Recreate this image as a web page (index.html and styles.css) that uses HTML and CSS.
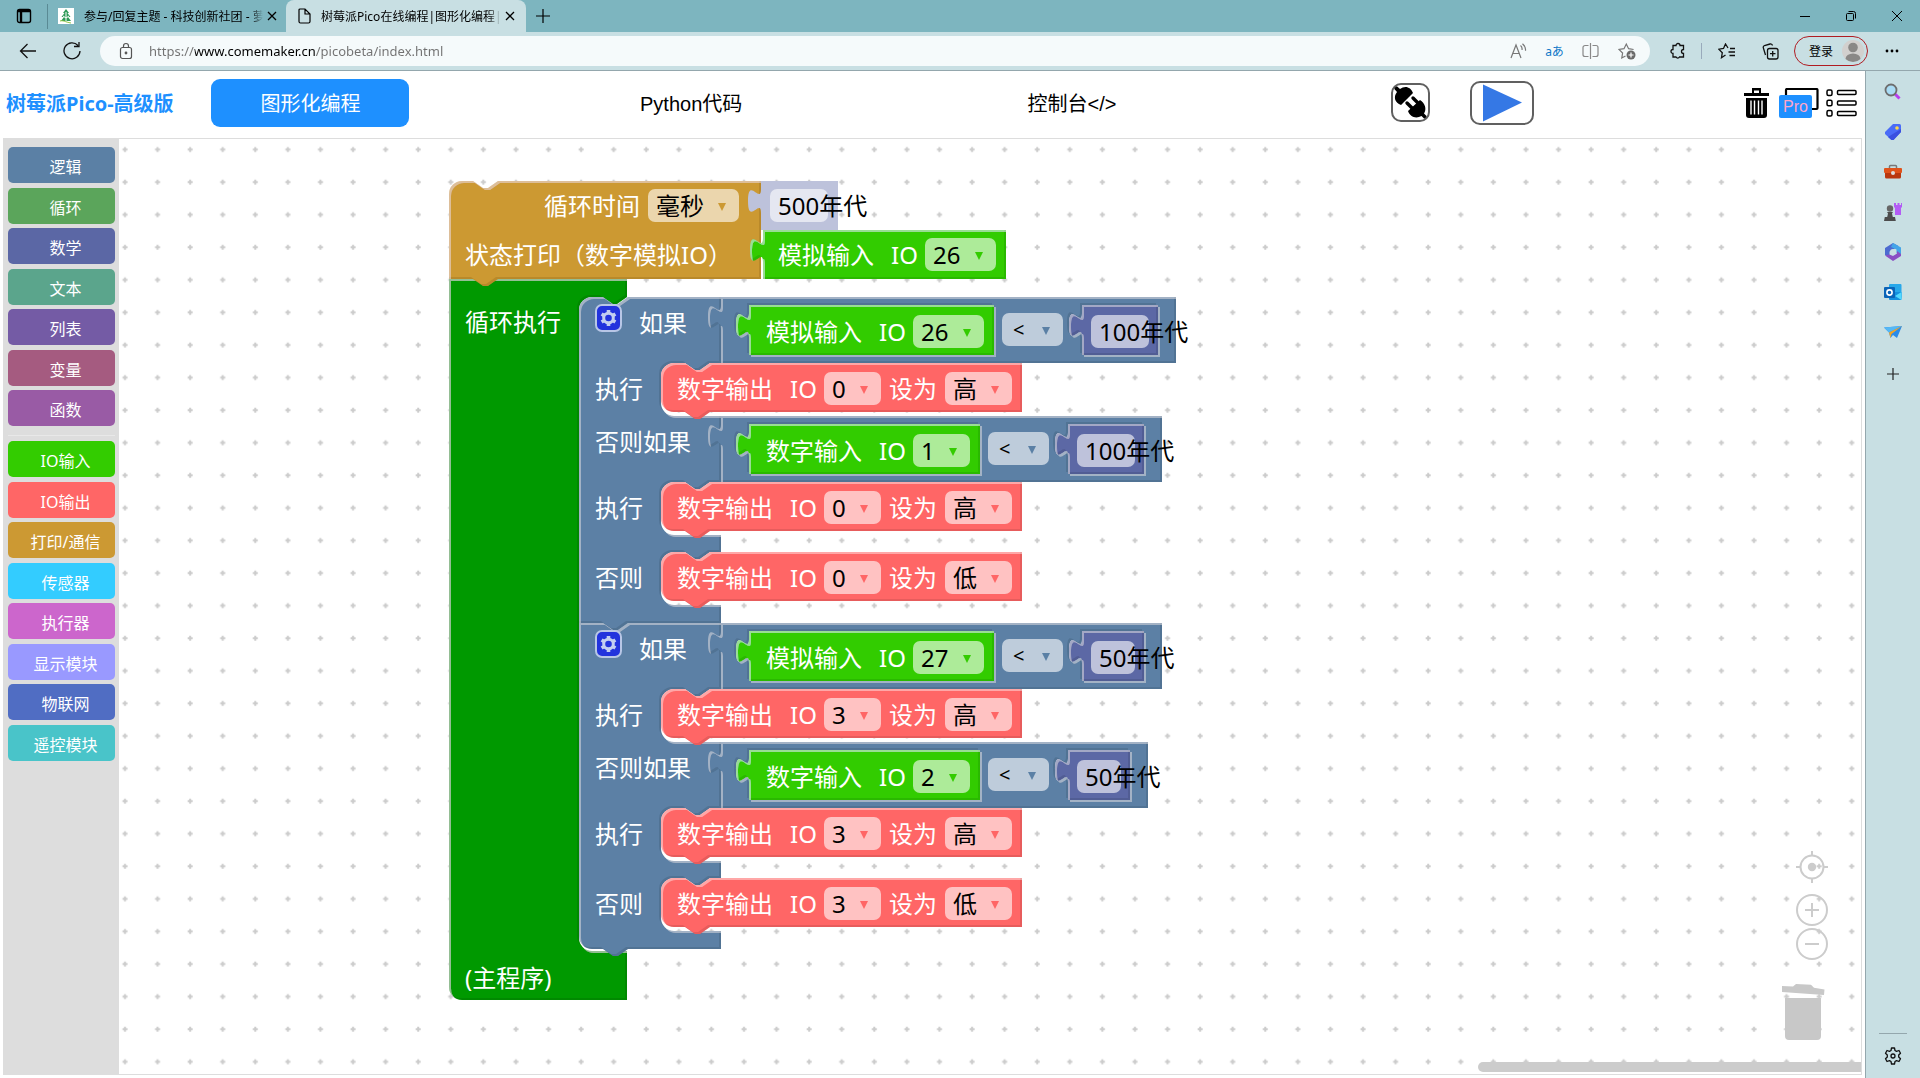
FILE: index.html
```html
<!DOCTYPE html>
<html lang="zh-CN">
<head>
<meta charset="utf-8">
<title>树莓派Pico在线编程|图形化编程</title>
<link rel="stylesheet" href="styles.css">
</head>
<body>
<div class="tabbar">
  <button class="icon-btn spaces" aria-label="工作区"><svg width="16" height="16" viewBox="0 0 16 16" fill="none" stroke="#000" stroke-width="1.4"><rect x="1.500" y="1.500" width="13" height="13" rx="2"/><path d="M1.500 3h13M5 4v10" stroke-width="2.400"/></svg></button>
  <span class="tab-sep"></span>
  <div class="tab">
    <svg width="16" height="16" viewBox="0 0 16 16"><rect width="16" height="16" fill="#fff"/><path d="M8 1l3 4H9.500l3 4H10l3 4H3l3-4H3.500l3-4H5z" fill="#2d9a57"/><path d="M8 4v9M5 8l3 2 3-2" stroke="#fff" stroke-width="1" fill="none"/><path d="M2 13c3-1 5 1 11 2" stroke="#8cc63f" fill="none"/></svg>
    <span class="tab-title">参与/回复主题 - 科技创新社团 - 萝</span>
    <button class="icon-btn close" aria-label="关闭"><svg width="10" height="10" viewBox="0 0 10 10" stroke="#000" stroke-width="1.300"><path d="M1 1l8 8M9 1l-8 8"/></svg></button>
  </div>
  <div class="tab active">
    <svg width="14" height="16" viewBox="0 0 14 16" fill="none" stroke="#000" stroke-width="1.200"><path d="M3 1h5l5 5v7.500a1.500 1.500 0 0 1-1.500 1.500h-8A1.500 1.500 0 0 1 2 13.500V2a1 1 0 0 1 1-1zM8 1v5h5"/></svg>
    <span class="tab-title">树莓派Pico在线编程|图形化编程|</span>
    <button class="icon-btn close" aria-label="关闭"><svg width="10" height="10" viewBox="0 0 10 10" stroke="#000" stroke-width="1.300"><path d="M1 1l8 8M9 1l-8 8"/></svg></button>
  </div>
  <button class="icon-btn new-tab" aria-label="新标签页"><svg width="14" height="14" viewBox="0 0 14 14" stroke="#000" stroke-width="1.200"><path d="M7 0v14M0 7h14"/></svg></button>
  <div class="window-btns">
    <button class="icon-btn" aria-label="最小化"><svg width="10" height="10" viewBox="0 0 10 10" stroke="#000"><path d="M0 5.500h10"/></svg></button>
    <button class="icon-btn" aria-label="还原"><svg width="10" height="10" viewBox="0 0 10 10" stroke="#000" fill="none"><rect x=".5" y="2.500" width="7" height="7" rx="1"/><path d="M2.500 .5h5a2 2 0 0 1 2 2v5"/></svg></button>
    <button class="icon-btn" aria-label="关闭窗口"><svg width="10" height="10" viewBox="0 0 10 10" stroke="#000"><path d="M0 0l10 10M10 0L0 10"/></svg></button>
  </div>
</div>

<div class="toolbar">
  <button class="icon-btn back" aria-label="后退"><svg width="18" height="16" viewBox="0 0 18 16" fill="none" stroke="#111" stroke-width="1.300"><path d="M17 8H1.500M8.500 1l-7 7 7 7"/></svg></button>
  <button class="icon-btn reload" aria-label="刷新"><svg width="18" height="20" viewBox="0 0 18 20" fill="none" stroke="#111" stroke-width="1.300"><path d="M15 4.500A8 8 0 1 0 17 10M16 1v4.500h-5"/></svg></button>
  <div class="omnibox">
    <svg width="14" height="18" viewBox="0 0 14 18" fill="none" stroke="#555" stroke-width="1.200"><rect x="1.500" y="5.500" width="11" height="11" rx="2"/><path d="M4.500 5.500V4a2.500 2.500 0 0 1 5 0v1.500"/><circle cx="7" cy="11" r=".8" fill="#555"/></svg>
    <input class="url" type="text" aria-label="地址" value="https://www.comemaker.cn/picobeta/index.html">
    <button class="icon-btn" aria-label="朗读"><svg width="17" height="16" viewBox="0 0 17 16" fill="none" stroke="#777" stroke-width="1.200"><path d="M1 15L6 2l5 13M3 10.500h6M10.500 2.500q2 1.500 1.500 4.500M12.500 .8q3.500 3 3 7"/></svg></button>
    <button class="icon-btn translate" aria-label="翻译">aあ</button>
    <button class="icon-btn" aria-label="分屏"><svg width="17" height="16" viewBox="0 0 17 16" fill="none" stroke="#888" stroke-width="1.200"><path d="M6.500 2.500H3a2 2 0 0 0-2 2v7a2 2 0 0 0 2 2h3.500M10.500 2.500H14a2 2 0 0 1 2 2v7a2 2 0 0 1-2 2h-3.500M8.500 0v16"/></svg></button>
    <button class="icon-btn" aria-label="收藏"><svg width="18" height="18" viewBox="0 0 18 18" fill="none" stroke="#777" stroke-width="1.200"><path d="M7.500 14L3.800 16l.8-5L1 7.500l5-.8L8.300 2l2.300 4.700 5 .8"/><circle cx="13" cy="13" r="4.500" fill="#6a6a6a" stroke="none"/><path d="M13 10.500v5M10.500 13h5" stroke="#fff"/></svg></button>
  </div>
  <button class="icon-btn puzzle" aria-label="扩展"><svg width="16" height="18" viewBox="0 0 16 18" fill="none" stroke="#111" stroke-width="1.300"><path d="M6 3.500a2 2 0 0 1 4 0h3.500v4a2 2 0 0 0 0 4v3.500h-4a2 2 0 0 1-3.500 0H3v-3.500a2 2 0 0 1 0-4v-4z"/></svg></button>
  <span class="tool-sep"></span>
  <button class="icon-btn favs" aria-label="收藏夹"><svg width="18" height="16" viewBox="0 0 18 16" fill="none" stroke="#111" stroke-width="1.300"><path d="M10 5L7.500 1 5.500 5.500.8 6.200l3.500 3.500-.8 5L7.500 12M12 5.500h5M10.500 9H17M11.500 12.500H17"/></svg></button>
  <button class="icon-btn colls" aria-label="集锦"><svg width="17" height="17" viewBox="0 0 17 17" fill="none" stroke="#111" stroke-width="1.300"><rect x="5.500" y="5.500" width="10.500" height="10.500" rx="2"/><path d="M10.700 8v5.500M8 10.700h5.500M3.500 12L1.200 4.500a2 2 0 0 1 1.300-2L8 1a2 2 0 0 1 2.500 1.500"/></svg></button>
  <button class="login">登录<svg width="22" height="22" viewBox="0 0 22 22"><circle cx="11" cy="11" r="11" fill="#d2d0ce"/><circle cx="11" cy="7.500" r="4.800" fill="#8a8886"/><path d="M3.500 19a7.500 5.500 0 0 1 15 0 11 11 0 0 1-15 0z" fill="#8a8886"/></svg></button>
  <button class="icon-btn more" aria-label="更多"><svg width="14" height="4" viewBox="0 0 14 4"><circle cx="2" cy="2" r="1.400"/><circle cx="7" cy="2" r="1.400"/><circle cx="12" cy="2" r="1.400"/></svg></button>
</div>

<div class="main">
  <div class="app">
    <header class="app-head">
      <h1 class="brand">树莓派Pico-高级版</h1>
      <button class="mode current">图形化编程</button>
      <button class="mode">Python代码</button>
      <button class="mode">控制台&lt;/&gt;</button>
      <div class="actions">
        <button class="box-btn connect" aria-label="连接"><svg width="35" height="35" viewBox="0 0 35 35"><path d="M0 2.500L2.500 0 7 4C12 0 18 2 20 8L8 20C2 18 0 12 4 7z"/><path d="M14 18l6 6M20 13l6 6" stroke="#000" stroke-width="3.400" stroke-linecap="round"/><path d="M15 26L27 15C32 18 34 24 31 28.500L35 32.500 32.500 35 28.500 31C23 34 17 32 15 26z"/></svg></button>
        <button class="box-btn run" aria-label="运行"><svg width="40" height="38" viewBox="0 0 40 38"><path d="M1 0.500L40 18.500 1 37.500z" fill="#3578e5"/></svg></button>
        <button class="icon-btn clear" aria-label="清空"><svg width="25" height="30" viewBox="0 0 25 30"><path d="M0 5h25v3H0zM8 5V0h9v5h-2V2.500h-5V5z"/><path d="M2 10h21v17a3 3 0 0 1-3 3H5a3 3 0 0 1-3-3z"/><path d="M7 12.500v14M10.500 12.500v14M14.500 12.500v14M18 12.500v14" stroke="#fff" stroke-width="1.400"/></svg></button>
        <button class="icon-btn pro" aria-label="Pro"><svg width="40" height="30" viewBox="0 0 40 30"><rect x="7" y="1" width="31.500" height="20" rx="1" fill="#fff" stroke="#000" stroke-width="2.200"/><rect x="0" y="7" width="33" height="23" rx="2" fill="#1e90ff" /><text x="4" y="24" class="pro-text">Pro</text></svg></button>
        <button class="icon-btn menu" aria-label="菜单"><svg width="31" height="28" viewBox="0 0 31 28" fill="none" stroke="#000" stroke-width="1.500"><rect x="1" y="1" width="5" height="5.500" rx="1.500"/><rect x="1" y="11.200" width="5" height="5.500" rx="1.500"/><rect x="1" y="21.500" width="5" height="5.500" rx="1.500"/><rect x="11.500" y="1.500" width="18.500" height="4" rx="1"/><rect x="11.500" y="12" width="18.500" height="4" rx="1"/><rect x="11.500" y="22.500" width="18.500" height="4" rx="1"/></svg></button>
      </div>
    </header>

    <div class="workspace">
      <nav class="toolbox">
        <div class="cats basic">
          <button class="cat logic">逻辑</button>
          <button class="cat loops">循环</button>
          <button class="cat math">数学</button>
          <button class="cat text">文本</button>
          <button class="cat lists">列表</button>
          <button class="cat vars">变量</button>
          <button class="cat funcs">函数</button>
        </div>
        <hr class="cat-sep">
        <div class="cats hardware">
          <button class="cat io-in">IO输入</button>
          <button class="cat io-out">IO输出</button>
          <button class="cat comm">打印/通信</button>
          <button class="cat sensor">传感器</button>
          <button class="cat actuator">执行器</button>
          <button class="cat display">显示模块</button>
          <button class="cat iot">物联网</button>
          <button class="cat remote">遥控模块</button>
        </div>
      </nav>

      <div class="canvas">
        <svg class="grid-dots" width="100%" height="100%" aria-hidden="true">
          <defs><pattern id="dots" width="32.580" height="32.580" patternUnits="userSpaceOnUse" x="-10" y="-5.500"><path d="M16 13.500v5M13.500 16h5" stroke="#ccc" stroke-width="2"/></pattern></defs>
          <rect width="100%" height="100%" fill="url(#dots)"/>
        </svg>

        <div class="program">
          <svg class="shapes" width="740" height="830" viewBox="0 0 740 830" aria-hidden="true">
            <defs>
              <filter id="bevel" x="-5%" y="-20%" width="110%" height="140%">
                <feOffset in="SourceAlpha" dx="2" dy="2" result="in"/>
                <feComposite in="SourceAlpha" in2="in" operator="out" result="tl"/>
                <feFlood flood-color="#fff" flood-opacity=".3"/>
                <feComposite in2="tl" operator="in" result="light"/>
                <feOffset in="SourceAlpha" dx="-2" dy="-2" result="out"/>
                <feComposite in="SourceAlpha" in2="out" operator="out" result="br"/>
                <feFlood flood-color="#000" flood-opacity=".2"/>
                <feComposite in2="br" operator="in" result="dark"/>
                <feMerge><feMergeNode in="SourceGraphic"/><feMergeNode in="dark"/><feMergeNode in="light"/></feMerge>
              </filter>
              <path id="write" class="c-out" filter="url(#bevel)" d="M0 13A13 13 0 0 1 13 0H24l10 7h5l10-7H361V49H49l-10 7h-5l-10-7H13A13 13 0 0 1 0 36z"/>
              <path id="in2" class="c-in" filter="url(#bevel)" d="M28 8v8c0 16-13-13-13 12s13-4 13 12V58H273V8z"/>
              <path id="in1" class="c-in" filter="url(#bevel)" d="M28 8v8c0 16-13-13-13 12s13-4 13 12V58H259V8z"/>
              <path id="n100" class="c-math" filter="url(#bevel)" d="M0 8v8c0 16-13-13-13 12s13-4 13 12V58H76V8z"/>
              <path id="n50" class="c-math" filter="url(#bevel)" d="M0 8v8c0 16-13-13-13 12s13-4 13 12V58H62V8z"/>
            </defs>
            <path class="c-main" filter="url(#bevel)" d="M0 98H178V116l-10 7h-5l-10-7H143a13 13 0 0 0-13 13V757a13 13 0 0 0 13 13H178V819H13A13 13 0 0 1 0 806z"/>
            <path class="c-comm" filter="url(#bevel)" d="M0 13A13 13 0 0 1 13 0H24l10 7h5l10-7H312V98H49l-10 7h-5l-10-7H0z"/>
            <path class="c-shadow" d="M312 0V8c0 16-13-13-13 12s13-4 13 12V49H389V0z"/>
            <path class="c-in" filter="url(#bevel)" d="M314 49V57c0 16-13-13-13 12s13-4 13 12V98H557V49z"/>
            <g transform="translate(130 442)">
              <path class="c-logic" filter="url(#bevel)" d="M0 0H24l10 7h5l10-7H142V66H131l-10 7h-5l-10-7H95a13 13 0 0 0-13 13v27a13 13 0 0 0 13 13H142V185H131l-10 7h-5l-10-7H95a13 13 0 0 0-13 13v27a13 13 0 0 0 13 13H142V255H131l-10 7h-5l-10-7H95a13 13 0 0 0-13 13v27a13 13 0 0 0 13 13H142V326H49l-10 7h-5l-10-7H13A13 13 0 0 1 0 313z"/>
              <use href="#write" x="82" y="66"/><use href="#write" x="82" y="185"/><use href="#write" x="82" y="255"/>
            </g>
            <g transform="translate(130 116)">
              <path class="c-logic" filter="url(#bevel)" d="M0 13A13 13 0 0 1 13 0H24l10 7h5l10-7H142V66H131l-10 7h-5l-10-7H95a13 13 0 0 0-13 13v27a13 13 0 0 0 13 13H142V185H131l-10 7h-5l-10-7H95a13 13 0 0 0-13 13v27a13 13 0 0 0 13 13H142V255H131l-10 7h-5l-10-7H95a13 13 0 0 0-13 13v27a13 13 0 0 0 13 13H142V326H49l-10 7h-5l-10-7H0z"/>
              <use href="#write" x="82" y="66"/><use href="#write" x="82" y="185"/><use href="#write" x="82" y="255"/>
            </g>
            <g transform="translate(272 116)">
              <path class="c-logic" filter="url(#bevel)" d="M0 0V8c0 16-13-13-13 12s13-4 13 12V66H455V0zM28 8v8c0 16-13-13-13 12s13-4 13 12V58H273V8zM361 8v8c0 16-13-13-13 12s13-4 13 12V58H437V8z"/>
              <use href="#in2"/><use href="#n100" x="361"/>
            </g>
            <g transform="translate(272 235)">
              <path class="c-logic" filter="url(#bevel)" d="M0 0V8c0 16-13-13-13 12s13-4 13 12V66H441V0zM28 8v8c0 16-13-13-13 12s13-4 13 12V58H259V8zM347 8v8c0 16-13-13-13 12s13-4 13 12V58H423V8z"/>
              <use href="#in1"/><use href="#n100" x="347"/>
            </g>
            <g transform="translate(272 442)">
              <path class="c-logic" filter="url(#bevel)" d="M0 0V8c0 16-13-13-13 12s13-4 13 12V66H441V0zM28 8v8c0 16-13-13-13 12s13-4 13 12V58H273V8zM361 8v8c0 16-13-13-13 12s13-4 13 12V58H423V8z"/>
              <use href="#in2"/><use href="#n50" x="361"/>
            </g>
            <g transform="translate(272 561)">
              <path class="c-logic" filter="url(#bevel)" d="M0 0V8c0 16-13-13-13 12s13-4 13 12V66H427V0zM28 8v8c0 16-13-13-13 12s13-4 13 12V58H259V8zM347 8v8c0 16-13-13-13 12s13-4 13 12V58H409V8z"/>
              <use href="#in1"/><use href="#n50" x="347"/>
            </g>
          </svg>

          <div class="code">
            <div class="print-row first">
              <span>循环时间</span>
              <span class="dd comm-dd unit"><select aria-label="时间单位"><option>毫秒</option></select></span>
              <span class="num wide"><input type="text" aria-label="时间" value="500年代"></span>
            </div>
            <div class="print-row">
              <span class="print-label">状态打印（数字模拟IO）</span>
              <div class="pin"><span>模拟输入</span><span>IO</span><span class="dd in-dd two"><select aria-label="IO"><option>26</option></select></span></div>
            </div>
            <div class="loop">
              <div class="loop-label">循环执行</div>
              <div class="loop-body">
                <section class="if">
                  <div class="if-row">
                    <div class="if-key"><button class="gear" aria-label="设置"><svg width="27" height="28" viewBox="0 0 27 28"><rect x="1" y="1" width="25" height="26" rx="6" fill="#2233dd" stroke="#b8c6e6" stroke-width="2"/><circle cx="13.500" cy="14" r="4.800" fill="none" stroke="#c3cff0" stroke-width="3"/><path d="M13.500 6v3.500M13.500 18.500V22M6.600 10l3 1.800M17.400 16.200l3 1.800M6.600 18l3-1.800M17.400 11.800l3-1.800" stroke="#c3cff0" stroke-width="3.600"/></svg></button><span>如果</span></div>
                    <div class="cmp"><div class="pin"><span>模拟输入</span><span>IO</span><span class="dd in-dd two"><select aria-label="IO"><option>26</option></select></span></div>
                    <span class="dd op-dd"><select aria-label="比较"><option>&lt;</option></select></span>
                    <span class="num wide"><input type="text" aria-label="数值" value="100年代"></span></div>
                  </div>
                  <div class="do-row"><span class="do-key">执行</span><div class="pin"><span>数字输出</span><span>IO</span><span class="dd out-dd one"><select aria-label="IO"><option>0</option></select></span><span class="set">设为</span><span class="dd out-dd level"><select aria-label="电平"><option>高</option></select></span></div></div>
                  <div class="if-row">
                    <div class="if-key">否则如果</div>
                    <div class="cmp"><div class="pin"><span>数字输入</span><span>IO</span><span class="dd in-dd one"><select aria-label="IO"><option>1</option></select></span></div>
                    <span class="dd op-dd"><select aria-label="比较"><option>&lt;</option></select></span>
                    <span class="num wide"><input type="text" aria-label="数值" value="100年代"></span></div>
                  </div>
                  <div class="do-row"><span class="do-key">执行</span><div class="pin"><span>数字输出</span><span>IO</span><span class="dd out-dd one"><select aria-label="IO"><option>0</option></select></span><span class="set">设为</span><span class="dd out-dd level"><select aria-label="电平"><option>高</option></select></span></div></div>
                  <div class="do-row else"><span class="do-key">否则</span><div class="pin"><span>数字输出</span><span>IO</span><span class="dd out-dd one"><select aria-label="IO"><option>0</option></select></span><span class="set">设为</span><span class="dd out-dd level"><select aria-label="电平"><option>低</option></select></span></div></div>
                </section>
                <section class="if">
                  <div class="if-row">
                    <div class="if-key"><button class="gear" aria-label="设置"><svg width="27" height="28" viewBox="0 0 27 28"><rect x="1" y="1" width="25" height="26" rx="6" fill="#2233dd" stroke="#b8c6e6" stroke-width="2"/><circle cx="13.500" cy="14" r="4.800" fill="none" stroke="#c3cff0" stroke-width="3"/><path d="M13.500 6v3.500M13.500 18.500V22M6.600 10l3 1.800M17.400 16.200l3 1.800M6.600 18l3-1.800M17.400 11.800l3-1.800" stroke="#c3cff0" stroke-width="3.600"/></svg></button><span>如果</span></div>
                    <div class="cmp"><div class="pin"><span>模拟输入</span><span>IO</span><span class="dd in-dd two"><select aria-label="IO"><option>27</option></select></span></div>
                    <span class="dd op-dd"><select aria-label="比较"><option>&lt;</option></select></span>
                    <span class="num"><input type="text" aria-label="数值" value="50年代"></span></div>
                  </div>
                  <div class="do-row"><span class="do-key">执行</span><div class="pin"><span>数字输出</span><span>IO</span><span class="dd out-dd one"><select aria-label="IO"><option>3</option></select></span><span class="set">设为</span><span class="dd out-dd level"><select aria-label="电平"><option>高</option></select></span></div></div>
                  <div class="if-row">
                    <div class="if-key">否则如果</div>
                    <div class="cmp"><div class="pin"><span>数字输入</span><span>IO</span><span class="dd in-dd one"><select aria-label="IO"><option>2</option></select></span></div>
                    <span class="dd op-dd"><select aria-label="比较"><option>&lt;</option></select></span>
                    <span class="num"><input type="text" aria-label="数值" value="50年代"></span></div>
                  </div>
                  <div class="do-row"><span class="do-key">执行</span><div class="pin"><span>数字输出</span><span>IO</span><span class="dd out-dd one"><select aria-label="IO"><option>3</option></select></span><span class="set">设为</span><span class="dd out-dd level"><select aria-label="电平"><option>高</option></select></span></div></div>
                  <div class="do-row else"><span class="do-key">否则</span><div class="pin"><span>数字输出</span><span>IO</span><span class="dd out-dd one"><select aria-label="IO"><option>3</option></select></span><span class="set">设为</span><span class="dd out-dd level"><select aria-label="电平"><option>低</option></select></span></div></div>
                </section>
              </div>
            </div>
            <div class="loop-end">(主程序)</div>
          </div>
        </div>

        <div class="zoom-tools">
          <button class="icon-btn" aria-label="居中"><svg width="32" height="32" viewBox="0 0 32 32" fill="none" stroke="#ccc" stroke-width="2"><circle cx="16" cy="16" r="11.500"/><circle cx="16" cy="16" r="4.200" fill="#ccc" stroke="none"/><path d="M16 0v4M16 28v4M0 16h4M28 16h4"/></svg></button>
          <button class="icon-btn zoom-in" aria-label="放大"><svg width="32" height="32" viewBox="0 0 32 32" fill="none" stroke="#ccc" stroke-width="2"><circle cx="16" cy="16" r="15"/><path d="M16 9v14M9 16h14"/></svg></button>
          <button class="icon-btn zoom-out" aria-label="缩小"><svg width="32" height="32" viewBox="0 0 32 32" fill="none" stroke="#ccc" stroke-width="2"><circle cx="16" cy="16" r="15"/><path d="M9 16h14"/></svg></button>
          <button class="icon-btn bin" aria-label="回收站"><svg width="43" height="56" viewBox="0 0 43 56" fill="#c8c8c8"><path d="M3 14h36v38a4 4 0 0 1-4 4H7a4 4 0 0 1-4-4zM0 2l11 .6L14 0l15 .8 3 3L42.500 5.500l-.5 5.500L0 8z"/></svg></button>
        </div>
        <div class="scrollbar"></div>
      </div>
    </div>
  </div>

  <aside class="side">
    <button class="icon-btn" aria-label="搜索"><svg width="18" height="18" viewBox="0 0 18 18"><path d="M10.500 10.500l5 5" stroke="#b83df0" stroke-width="3"/><circle cx="7" cy="7" r="5.500" fill="#a9dcf5" stroke="#6d6d6d" stroke-width="1.800"/></svg></button>
    <button class="icon-btn" aria-label="购物"><svg width="18" height="18" viewBox="0 0 18 18"><path d="M9 1h6.500A1.500 1.500 0 0 1 17 2.500V9l-7.500 8h-2L1 11V9z" fill="#4a6cf7"/><path d="M17 6v3l-7.500 8h-2L4 14z" fill="#3a50e0"/><circle cx="13" cy="5" r="1.800" fill="#ffd84a"/></svg></button>
    <button class="icon-btn" aria-label="工具"><svg width="18" height="18" viewBox="0 0 18 18"><path d="M5.500 5V3.500a1 1 0 0 1 1-1h5a1 1 0 0 1 1 1V5" fill="none" stroke="#777" stroke-width="1.500"/><rect x="0" y="5" width="18" height="5" rx="1" fill="#e0521a"/><path d="M1 10h16v4a1.500 1.500 0 0 1-1.500 1.500h-13A1.500 1.500 0 0 1 1 14z" fill="#b9370f"/><circle cx="9" cy="10" r="2" fill="#ddd"/></svg></button>
    <button class="icon-btn" aria-label="游戏"><svg width="18" height="18" viewBox="0 0 18 18"><path d="M10 0h2v2h1.500V0h2v2H17V0h1v4l-1 1v7h-6V5l-1-1z" fill="#b35cf5"/><circle cx="6" cy="5.500" r="3.200" fill="#666"/><path d="M3 9h6l-1 1.500.8 3.500H11l.8 4H0l.8-4h2.400L4 10.500z" fill="#4c4c4c"/></svg></button>
    <button class="icon-btn" aria-label="Microsoft 365"><svg width="18" height="18" viewBox="0 0 18 18"><path d="M9 0l5.500 3L10 6 5.500 8.500v6L1 12V5z" fill="#4d6bd0"/><path d="M9 0l8 4.500V13l-4.500-3V6.500L7 4z" fill="#44a5e8"/><path d="M17 11v2l-8 5-8-5.500 4.500-1L9 13l4-2.500V8z" fill="#8a4fc4"/><circle cx="9" cy="9" r="3" fill="#c8dfe3"/></svg></button>
    <button class="icon-btn" aria-label="Outlook"><svg width="18" height="18" viewBox="0 0 18 18"><rect x="5" y="1" width="12.500" height="14" rx="1" fill="#28a8ea"/><path d="M5 9l12.500 0V16a1 1 0 0 1-1 1H6a1 1 0 0 1-1-1z" fill="#1490df"/><path d="M17.500 9L11 13l6.500 4z" fill="#50d9ff"/><rect x="0" y="4" width="11" height="11" rx="1" fill="#0a64b8"/><circle cx="5.500" cy="9.500" r="2.600" fill="none" stroke="#fff" stroke-width="1.600"/></svg></button>
    <button class="icon-btn" aria-label="Drop"><svg width="18" height="18" viewBox="0 0 18 18"><path d="M0 4.500L18 3l-5 12-4-3-2.500 3L5 9.500z" fill="#2b8be8"/><path d="M0 4.500L18 3 5 9.500z" fill="#55b8f5"/><path d="M18 3L5 9.500l1.500 5.500 1-4z" fill="#f5a623"/></svg></button>
    <button class="icon-btn add" aria-label="添加"><svg width="18" height="18" viewBox="0 0 18 18" stroke="#222" stroke-width="1.200"><path d="M9 3v12M3 9h12"/></svg></button>
    <hr class="side-sep">
    <button class="icon-btn" aria-label="设置"><svg width="18" height="18" viewBox="0 0 18 18" fill="none" stroke="#111" stroke-width="1.300" stroke-linejoin="round"><circle cx="9" cy="9" r="2"/><path d="M7.500 1h3l.5 2.500 1.500.9 2.500-.9 1.500 2.700L14.700 8v2l1.800 1.800L15 14.500l-2.500-.9-1.500.9-.5 2.500h-3L7 14.500l-1.500-.9-2.500.9-1.500-2.700L3.300 10V8L1.500 6.200 3 3.500l2.500.9L7 3.500z"/></svg></button>
  </aside>
</div>
</body>
</html>
```

FILE: styles.css
```css
* { box-sizing: border-box; }
body {
  margin: 0;
  min-height: 100vh;
  display: flex;
  flex-direction: column;
  background: #c8dfe3;
  font-family: "Noto Sans", "Noto Sans CJK SC", sans-serif;
  color: #000;
}
button, input, select { font: inherit; color: inherit; }
button { border: 0; padding: 0; background: none; }
svg { display: block; flex: none; }
.icon-btn { display: flex; align-items: center; justify-content: center; flex: none; }

/* browser tab strip */
.tabbar {
  height: 32px;
  display: flex;
  align-items: center;
  background: #7db5bf;
  font-size: 12px;
}
.spaces { margin-left: 16px; }
.tab-sep { width: 1px; height: 25px; margin-left: 15px; background: #5a8a94; }
.tab { display: flex; align-items: center; height: 32px; width: 238px; padding: 0 9px 0 10px; }
.tab.active { width: 240px; padding: 0 11px; background: #c8dfe3; border-radius: 8px 8px 0 0; }
.tab-title {
  flex: 1;
  margin: 0 4px 0 10px;
  overflow: hidden;
  white-space: nowrap;
  -webkit-mask-image: linear-gradient(to left, transparent, #000 12px);
  mask-image: linear-gradient(to left, transparent, #000 12px);
}
.new-tab { margin-left: 10px; }
.window-btns { display: flex; gap: 36px; margin: 0 18px 0 auto; }

/* address bar */
.toolbar { height: 39px; display: flex; align-items: center; border-bottom: 1px solid #94a7ad; }
.back { margin-left: 19px; }
.reload { margin-left: 26px; }
.omnibox {
  flex: 1;
  display: flex;
  align-items: center;
  gap: 19px;
  height: 30px;
  margin-left: 19px;
  padding: 0 14px 0 19px;
  border-radius: 15px;
  background: #f5fafb;
}
.url {
  flex: 1;
  min-width: 0;
  border: 0;
  padding: 0;
  margin-left: -3px;
  font-size: 13px;
  color: transparent;
  background: linear-gradient(to right, #717171 46px, #000 46px, #000 167px, #717171 167px);
  -webkit-background-clip: text;
  background-clip: text;
}
.translate { width: 17px; font-size: 12px; white-space: nowrap; color: #0f78c8; }
.puzzle { margin-left: 20px; }
.tool-sep { width: 1px; height: 16px; margin-left: 15px; background: #9ab; }
.favs { margin-left: 16px; }
.colls { margin-left: 26px; }
.login {
  display: flex;
  align-items: center;
  justify-content: space-between;
  width: 74px;
  height: 30px;
  margin-left: 15px;
  padding: 0 3px 0 14px;
  border: 1px solid #b01c22;
  border-radius: 15px;
  font-size: 12px;
}
.more { margin: 0 21px 0 17px; }

.main { flex: 1; display: flex; }
.app { flex: 1; min-width: 0; display: flex; flex-direction: column; background: #fff; border-right: 1px solid #94a7ad; }

/* page header */
.app-head {
  display: grid;
  grid-template-columns: 120px repeat(3, 381fr) 603fr;
  align-items: center;
  height: 67px;
  padding-bottom: 4px;
}
.brand { margin: 3px 0 0 6px; font-size: 20px; line-height: 32px; white-space: nowrap; color: #1e90ff; }
.mode { justify-self: center; width: 198px; height: 48px; font-family: "Liberation Sans", "Noto Sans CJK SC", sans-serif; font-size: 20px; }
.current { background: #1e90ff; color: #fff; border-radius: 9px; }
.actions { display: flex; align-items: center; padding: 0 8px 0 129px; }
.box-btn { display: flex; align-items: center; justify-content: center; flex: none; border: 2px solid #606060; border-radius: 10px; overflow: hidden; }
.connect { width: 39px; height: 39px; }
.run { width: 64px; height: 44px; margin-left: 40px; }
.clear { margin-left: auto; }
.pro { margin-left: 10px; }
.menu { margin-left: 7px; }
.pro-text { font: 16px "Liberation Sans", sans-serif; fill: #ffa6c9; }

/* workspace */
.workspace {
  flex: 1;
  display: flex;
  margin: 0 3px 3px;
  border: 1px solid #ddd;
  border-left: 0;
}
.toolbox { flex: none; width: 116px; padding: 8px 4px 0 5px; background: #ddd; }
.cats { display: flex; flex-direction: column; justify-content: space-between; }
.basic { height: 279px; }
.hardware { height: 320px; }
.cat { height: 36px; padding: 4px 0 0 8px; border-radius: 5px; color: #fff; font-size: 16px; line-height: 32px; }
.cat-sep { height: 1px; margin: 9px 0 5px; border: 0; background: #e8e8e8; }
.logic { background: #5b80a5; }
.loops { background: #5ba55b; }
.math { background: #5b67a5; }
.text { background: #5ba58c; }
.lists { background: #745ba5; }
.vars { background: #a55b80; }
.funcs { background: #995ba5; }
.io-in { background: #33cc00; }
.io-out { background: #ff6666; }
.comm { background: #cc9933; }
.sensor { background: #33ccff; }
.actuator { background: #cc66cc; }
.display { background: #9999ff; }
.iot { background: #506dc3; }
.remote { background: #49c4c9; }

.canvas { position: relative; flex: 1; overflow: hidden; }
.grid-dots { position: absolute; inset: 0; }
.program { position: absolute; left: 330px; top: 42px; width: 740px; }
.shapes { position: absolute; left: 0; top: 0; overflow: visible; }
.c-main { fill: #009900; }
.c-comm { fill: #cc9933; }
.c-in { fill: #33cc00; }
.c-out { fill: #ff6666; }
.c-logic { fill: #5b80a5; fill-rule: evenodd; }
.c-math { fill: #5b67a5; }
.c-shadow { fill: #bdc2db; }

/* fields on the blocks */
.code { position: relative; font-size: 24px; line-height: 33px; color: #fff; white-space: nowrap; }
.print-row { display: flex; gap: 8px; height: 49px; padding: 8px 0 0 16px; }
.print-row.first { padding-left: 95px; }
.print-row .pin { margin-left: 40px; }
.print-row .num { margin-left: 23px; }
.print-label { width: 265px; }
.loop { display: flex; }
.loop-label { width: 130px; padding: 26px 0 0 16px; }
.loop-body { padding-top: 18px; }
.loop-end { padding: 12px 0 0 16px; }
.if { padding-bottom: 18px; }
.if-row { display: flex; height: 66px; }
.if-key { display: flex; gap: 17px; width: 142px; padding: 9px 0 0 16px; }
.gear { height: 28px; margin-top: -2px; }
.cmp { display: flex; padding: 18px 0 0 45px; }
.do-row { display: flex; height: 53px; padding: 9px 0 0 16px; }
.else { margin-top: 17px; }
.do-key { width: 82px; }
.pin { display: grid; grid-template-columns: 113px 34px repeat(3, auto); height: 33px; }
.set { padding: 0 8px; }
.dd { position: relative; display: block; height: 33px; border-radius: 7px; background: rgba(255, 255, 255, .6); }
.dd::after {
  content: "";
  position: absolute;
  right: 13px;
  top: 14px;
  border: 4px solid transparent;
  border-top: 8px solid currentColor;
  border-bottom: 0;
  pointer-events: none;
}
.dd select { appearance: none; display: block; width: 100%; height: 33px; border: 0; padding: 0 0 0 8px; background: none; color: #000; line-height: 33px; }
.comm-dd { color: #cc9933; }
.in-dd { color: #33cc00; }
.out-dd { color: #ff6666; }
.op-dd { color: #5b80a5; width: 61px; margin: -2px 28px 0 18px; }
.op-dd select { font-size: 20px; padding-left: 11px; }
.unit { width: 91px; }
.two { width: 71px; }
.one { width: 57px; }
.level { width: 67px; }
.num { display: block; width: 44px; height: 33px; border-radius: 7px; background: rgba(255, 255, 255, .6); }
.num.wide { width: 58px; }
.num input { display: block; width: 110px; height: 33px; border: 0; padding: 0 0 0 8px; background: none; color: #000; }

.zoom-tools { position: absolute; right: 20px; bottom: 34px; display: flex; flex-direction: column; align-items: center; }
.zoom-in { margin-top: 11px; }
.zoom-out { margin-top: 2px; }
.bin { margin: 24px 16px 0 0; }
.scrollbar { position: absolute; right: 0; bottom: 2px; width: 383px; height: 10px; background: #ccc; border-radius: 5px 0 0 5px; }

/* browser side bar */
.side { flex: none; width: 54px; display: flex; flex-direction: column; align-items: center; gap: 22px; padding: 12px 0 13px; }
.add { margin-top: 2px; }
.side-sep { width: 28px; height: 1px; margin: auto 0 -9px; border: 0; background: #94a7ad; }
```
